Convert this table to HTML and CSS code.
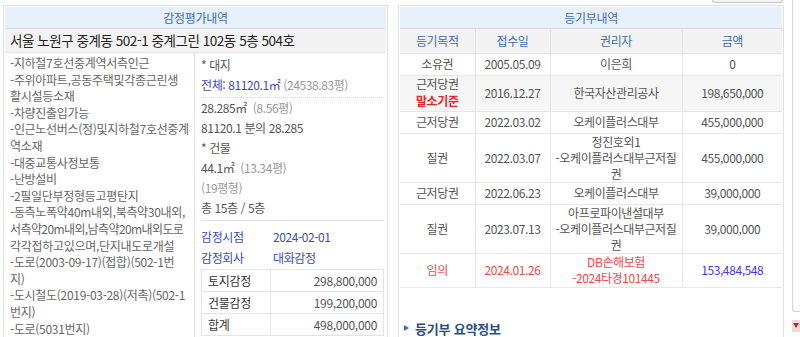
FILE: index.html
```html
<!DOCTYPE html>
<html lang="ko">
<head>
<meta charset="utf-8">
<title>감정평가내역 / 등기부내역</title>
<link rel="stylesheet" href="styles.css">
</head>
<body>
<div class="page">
  <div class="col col-left">
    <section class="panel">
      <div class="ph">감정평가내역</div>
      <div class="addr">서울 노원구 중계동 502-1 중계그린 102동 5층 504호</div>
      <div class="body">
        <div class="desc">
          <p>-지하철7호선중계역서측인근</p>
          <p>-주위아파트,공동주택및각종근린생<br>활시설등소재</p>
          <p>-차량진출입가능</p>
          <p>-인근노선버스(정)및지하철7호선중계<br>역소재</p>
          <p>-대중교통사정보통</p>
          <p>-난방설비</p>
          <p>-2필일단부정형등고평탄지</p>
          <p>-동측노폭약40m내외,북측약30내외,<br><span class="tight">서측약20m내외,남측약20m내외도로</span><br>각각접하고있으며,단지내도로개설</p>
          <p>-도로(2003-09-17)(접합)(502-1번<br>지)</p>
          <p>-도시철도(2019-03-28)(저촉)(502-1<br>번지)</p>
          <p>-도로(5031번지)</p>
        </div>
        <div class="info">
          <div class="ln">* 대지</div>
          <div class="ln dotted"><span class="blue">전체: 81120.1㎡</span> <span class="muted">(24538.83평)</span></div>
          <div class="ln">28.285㎡ &nbsp;<span class="muted">(8.56평)</span></div>
          <div class="ln">81120.1 분의 28.285</div>
          <div class="ln">* 건물</div>
          <div class="ln">44.1㎡ &nbsp;<span class="muted">(13.34평)</span></div>
          <div class="ln muted">(19평형)</div>
          <div class="ln solid">총 15층 / 5층</div>
          <div class="kv"><span class="k">감정시점</span><span class="v">2024-02-01</span></div>
          <div class="kv"><span class="k">감정회사</span><span class="v">대화감정</span></div>
          <table class="amt">
            <tr><td class="al">토지감정</td><td class="ar">298,800,000</td></tr>
            <tr><td class="al">건물감정</td><td class="ar">199,200,000</td></tr>
            <tr><td class="al">합계</td><td class="ar">498,000,000</td></tr>
          </table>
        </div>
      </div>
    </section>
  </div>
  <div class="col col-right">
    <div class="tool"></div>
    <section class="panel">
      <div class="ph">등기부내역</div>
      <table class="reg">
        <colgroup><col class="c1"><col class="c2"><col class="c3"><col class="c4"></colgroup>
        <thead>
          <tr><th>등기목적</th><th>접수일</th><th>권리자</th><th>금액</th></tr>
        </thead>
        <tbody>
          <tr><td>소유권</td><td>2005.05.09</td><td>이은희</td><td>0</td></tr>
          <tr class="gray"><td>근저당권<br><b class="red-b">말소기준</b></td><td>2016.12.27</td><td>한국자산관리공사</td><td>198,650,000</td></tr>
          <tr><td>근저당권</td><td>2022.03.02</td><td>오케이플러스대부</td><td>455,000,000</td></tr>
          <tr><td>질권</td><td>2022.03.07</td><td>정진호외1<br>-오케이플러스대부근저질<br>권</td><td>455,000,000</td></tr>
          <tr><td>근저당권</td><td>2022.06.23</td><td>오케이플러스대부</td><td>39,000,000</td></tr>
          <tr><td>질권</td><td>2023.07.13</td><td>아프로파이낸셜대부<br>-오케이플러스대부근저질<br>권</td><td>39,000,000</td></tr>
          <tr class="red"><td>임의</td><td>2024.01.26</td><td>DB손해보험<br>-2024타경101445</td><td class="bl">153,484,548</td></tr>
        </tbody>
      </table>
      <div class="sum"><span class="tri"></span>등기부 요약정보</div>
    </section>
  </div>
  <div class="side">
    <div class="side-box"></div>
    <div class="side-icon"><span class="down"></span></div>
  </div>
</div>
</body>
</html>
```
FILE: styles.css
```css
* { box-sizing: border-box; }
html, body { margin: 0; padding: 0; background: #fff; }
body {
  font-family: "Noto Sans CJK KR", "Noto Sans", sans-serif;
  font-size: 12px;
  color: #555;
  width: 800px;
  height: 337px;
  overflow: hidden;
}
.page {
  display: flex;
  align-items: flex-start;
  padding-left: 3px;
}
.col-left { width: 386px; padding-top: 5px; }
.col-right { width: 388px; margin-left: 10px; }
.tool {
  height: 3px;
  width: 71px;
  margin-left: auto;
  margin-right: 1px;
  border: 1px solid #c9c9c9;
  border-top: none;
  border-radius: 0 0 3px 3px;
  background: #f3f3f3;
  margin-bottom: 2px;
}
.panel {
  border: 1px solid #dde2e8;
  padding: 1px;
  height: 400px;
  background: #fff;
}
.ph {
  height: 22px;
  line-height: 21px;
  text-align: center;
  background: #e8f1fb;
  border-bottom: 1px solid #d3deeb;
  color: #3d6fb3;
  font-size: 12px;
  letter-spacing: -0.3px;
}
.addr {
  height: 24px;
  line-height: 23px;
  background: #f3f3f3;
  border-bottom: 1px solid #e3e3e3;
  color: #222;
  font-size: 13.5px;
  padding-left: 5px;
  letter-spacing: -0.45px;
}
.body { display: flex; }
.desc {
  width: 190px;
  padding: 2px 0 0 5px;
  border-right: 1px solid #e4e4e4;
  line-height: 16.6px;
  letter-spacing: -0.3px;
  color: #666;
  white-space: nowrap;
}
.desc p { margin: 0; }
.desc .tight { letter-spacing: -0.6px; }
.info {
  flex: 1;
  padding: 2px 2px 0 6px;
  color: #555;
  letter-spacing: -0.4px;
}
.ln { height: 20px; line-height: 20px; white-space: nowrap; }
.ln.dotted { border-bottom: 1px dotted #d8d8d8; height: 23px; }
.ln.solid { border-bottom: 1px solid #e2e2e2; height: 23px; margin-bottom: 5px; }
.blue { color: #3b4cc0; }
.muted { color: #999; }
.kv { display: flex; height: 21px; line-height: 21px; color: #3b4cc0; }
.kv .k { width: 72px; }
.amt {
  margin-top: 1px;
  width: 183px;
  border-collapse: collapse;
  letter-spacing: -0.3px;
}
.amt td {
  border: 1px solid #e4e4e4;
  height: 22px;
  padding: 0 6px;
  line-height: 20px;
}
.amt .al { width: 69px; color: #333; }
.amt .ar { text-align: right; color: #555; }
.reg {
  width: 100%;
  border-collapse: collapse;
  table-layout: fixed;
  letter-spacing: -0.4px;
}
.reg col.c1 { width: 75px; }
.reg col.c2 { width: 75px; }
.reg col.c3 { width: 132px; }
.reg col.c4 { width: auto; }
.reg th {
  height: 24px;
  background: #f3f3f3;
  color: #3d6fb3;
  font-weight: normal;
  border-left: 1px solid #e3e3e3;
  border-bottom: 1px solid #e3e3e3;
}
.reg td {
  height: 22px;
  padding: 0 2px;
  text-align: center;
  line-height: 16px;
  border-left: 1px solid #e6e6e6;
  border-bottom: 1px solid #e6e6e6;
  color: #555;
}
.reg th:first-child, .reg td:first-child { border-left: none; }
.reg tr.gray td { background: #f6f6f6; height: 36px; }
.red-b { color: #ee1c25; font-weight: bold; line-height: 18px; }
.reg tr.red td { color: #f04848; height: 34px; }
.reg tr.red td.bl { color: #3b3bf0; }
.sum {
  margin-top: 32px;
  padding-left: 4px;
  font-size: 13px;
  line-height: 17px;
  font-weight: bold;
  color: #2b4d86;
  display: flex;
  align-items: center;
  gap: 6px;
  letter-spacing: -0.2px;
}
.tri {
  width: 0; height: 0;
  border-left: 5px solid #3d6fb3;
  border-top: 3px solid transparent;
  border-bottom: 3px solid transparent;
}
.side {
  margin-left: 8px;
  width: 8px;
  display: flex;
  flex-direction: column;
}
.side-box {
  height: 312px;
  border-left: 1px solid #d4d4d4;
  border-bottom: 1px solid #d4d4d4;
  border-radius: 0 0 0 3px;
}
.side-icon {
  margin-top: 8px;
  height: 12px;
  background: #f3d9cf;
  padding: 3px 0 0 1px;
}
.down {
  display: block;
  width: 0; height: 0;
  border-top: 5px solid #c0282c;
  border-left: 3px solid transparent;
  border-right: 3px solid transparent;
}
```
